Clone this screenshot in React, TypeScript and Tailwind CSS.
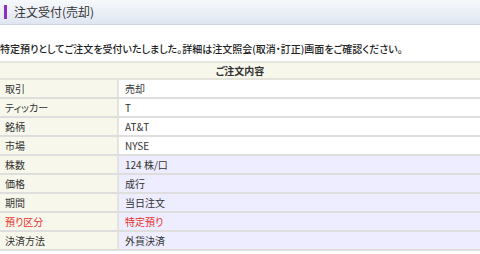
import React from "react";

const rows: { label: string; value: string; red?: boolean; shade?: boolean }[] = [
  { label: "取引", value: "売却" },
  { label: "ティッカー", value: "T" },
  { label: "銘柄", value: "AT&T" },
  { label: "市場", value: "NYSE" },
  { label: "株数", value: "124 株/口", shade: true },
  { label: "価格", value: "成行", shade: true },
  { label: "期間", value: "当日注文", shade: true },
  { label: "預り区分", value: "特定預り", red: true, shade: true },
  { label: "決済方法", value: "外貨決済", shade: true },
];

export default function App() {
  return (
    <div
      className="w-[480px] h-[254px] overflow-hidden bg-white text-[#333] [font-feature-settings:'palt']"
      style={{ fontFamily: '"Noto Sans CJK JP", "Noto Sans", sans-serif' }}
    >
      <div className="h-[25px] flex items-center border-b border-[#cfd5dd] bg-gradient-to-b from-[#f6f8fb] to-[#dfe6f1]">
        <div className="ml-[4px] w-[3px] h-[14px] bg-[#8a2fc0]" />
        <div className="ml-[7px] text-[12px] leading-none text-[#333]">注文受付(売却)</div>
      </div>
      <div className="mt-[18px] text-[10px] leading-[12px] whitespace-nowrap font-medium text-[#222]">
        特定預りとしてご注文を受付いたしました。詳細は注文照会(取消・訂正)画面をご確認ください。
      </div>
      <div className="mt-[6px] border-t-2 border-[#e4e4dc]">
        <div className="h-[17px] flex items-center justify-center bg-[#f7f7ec] text-[10px] font-bold text-[#333] border-b-2 border-[#e4e4dc]">
          ご注文内容
        </div>
        {rows.map((r) => (
          <div key={r.label} className="grid grid-cols-[119px_1fr] h-[19px] border-b-2 border-[#dedede]">
            <div
              className={`flex items-center pl-[5px] bg-[#f7f7ec] border-r-2 border-[#e4e4dc] text-[10px] ${
                r.red ? "text-[#e8302c]" : "text-[#333]"
              }`}
            >
              {r.label}
            </div>
            <div
              className={`flex items-center pl-[6px] text-[10px] ${r.shade ? "bg-[#ededff]" : "bg-white"} ${
                r.red ? "text-[#e8302c]" : "text-[#333]"
              }`}
            >
              {r.value}
            </div>
          </div>
        ))}
      </div>
    </div>
  );
}
